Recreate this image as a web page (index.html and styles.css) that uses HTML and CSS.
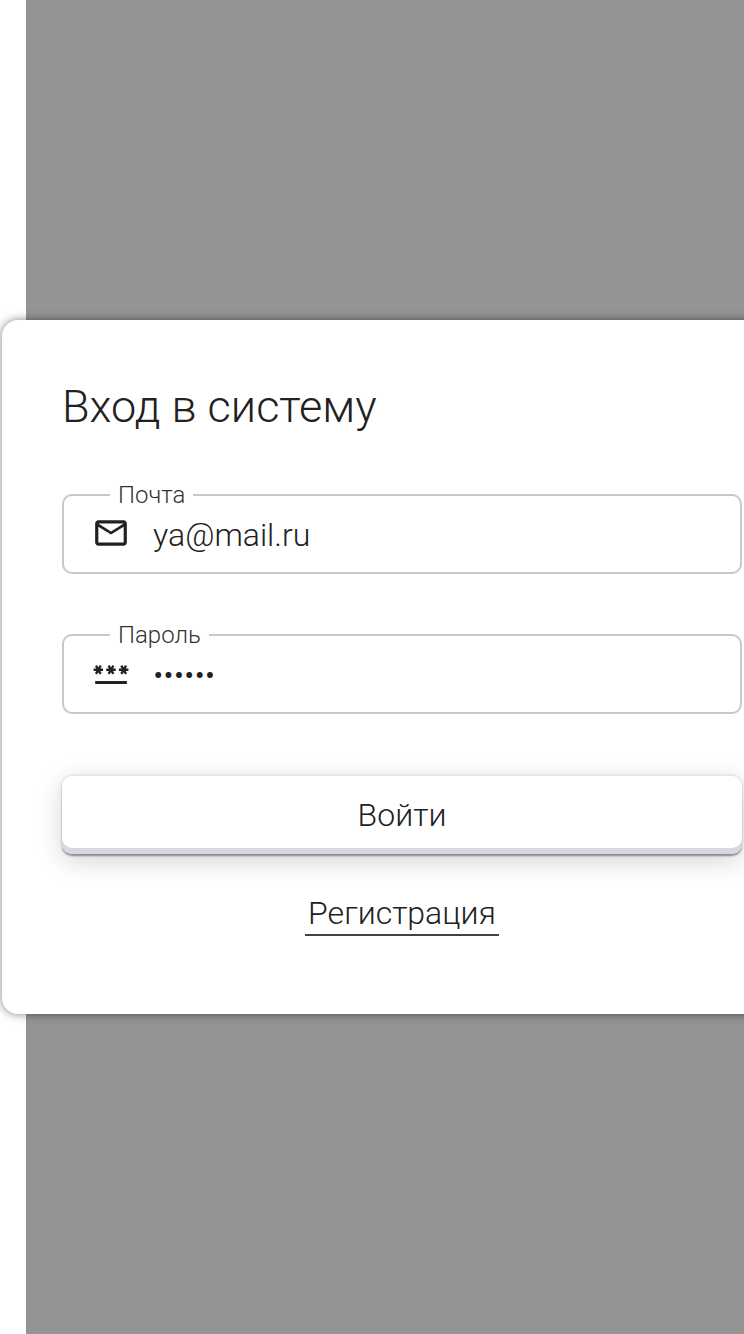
FILE: index.html
```
<!DOCTYPE html>
<html lang="ru">
<head>
<meta charset="utf-8">
<meta name="viewport" content="width=device-width, initial-scale=1">
<title>Вход в систему</title>
<link rel="stylesheet" href="styles.css">
</head>
<body>
<main class="backdrop">
  <form class="card">
    <h1 class="title">Вход в систему</h1>
    <fieldset class="field">
      <legend class="legend"><label for="email">Почта</label></legend>
      <div class="row">
        <svg class="icon" viewBox="0 0 24 24" aria-hidden="true"><path d="M22 6c0-1.100-.9-2-2-2H4c-1.100 0-2 .9-2 2v12c0 1.100.9 2 2 2h16c1.100 0 2-.9 2-2V6zm-2 0-8 5-8-5h16zm0 12H4V8l8 5 8-5v10z"/></svg>
        <input class="input" id="email" type="email" value="ya@mail.ru">
      </div>
    </fieldset>
    <fieldset class="field">
      <legend class="legend"><label for="password">Пароль</label></legend>
      <div class="row">
        <svg class="icon" viewBox="0 0 24 24" aria-hidden="true"><path d="M2 17h20v2H2v-2zm1.150-4.050L4 11.470l.85 1.480 1.300-.75-.85-1.480H7v-1.500H5.300l.85-1.470L4.850 7 4 8.470 3.150 7l-1.300.75.85 1.470H1v1.500h1.700l-.85 1.480 1.300.75zm6.700-.75 1.300.75.85-1.480.85 1.480 1.300-.75-.85-1.480H15v-1.500h-1.700l.85-1.470-1.300-.75L12 8.470 11.150 7l-1.300.75.85 1.470H9v1.500h1.700l-.85 1.480zM23 9.220h-1.700l.85-1.470-1.300-.75L20 8.470 19.150 7l-1.300.75.85 1.470H17v1.500h1.700l-.85 1.480 1.300.75.85-1.480.85 1.480 1.300-.75-.85-1.480H23v-1.500z"/></svg>
        <input class="input" id="password" type="password" value="secret">
      </div>
    </fieldset>
    <button class="submit" type="submit">Войти</button>
    <a class="register" href="#register">Регистрация</a>
  </form>
</main>
</body>
</html>
```
FILE: styles.css
```
* {
  box-sizing: border-box;
}

html {
  overflow-x: hidden;
}

body {
  margin: 0;
  background: #fff;
  color: #212121;
  font-family: Roboto, "Noto Sans", sans-serif;
  font-weight: 300;
}

.backdrop {
  display: flex;
  align-items: center;
  min-height: 100vh;
  margin-left: 26px;
  background: #949494;
}

/* The card is wider than the backdrop and hangs over both of its sides. */
.card {
  display: flex;
  flex: none;
  flex-direction: column;
  width: calc(100% + 82px);
  margin-left: -24px;
  padding: 60px 60px 78px;
  border-radius: 16px;
  background: #fff;
  box-shadow: 0 0 10px rgba(0, 0, 0, 0.5);
}

.title {
  margin: 0 0 48px;
  font-size: 45px;
  font-weight: 300;
  line-height: 54px;
}

.field {
  min-width: 0;
  height: 92px;
  margin: 0 0 48px;
  padding: 0 28px;
  border: 2px solid #c8c8c8;
  border-radius: 10px;
}

.legend {
  margin-left: 18px;
  padding: 0 8px;
  color: #333;
  font-size: 24px;
  line-height: 26px;
}

.row {
  display: flex;
  align-items: center;
  gap: 23px;
  height: 54px;
}

.icon {
  flex: none;
  width: 38px;
  height: 38px;
  margin-bottom: 4px;
  fill: #212121;
}

.input {
  flex: 1;
  min-width: 0;
  padding: 0;
  border: 0;
  outline: 0;
  background: none;
  color: inherit;
  font: inherit;
  font-size: 32px;
  line-height: 40px;
}

.submit {
  height: 80px;
  margin-top: 12px;
  padding: 2px 0 0;
  border: 0;
  border-radius: 10px;
  background: #fff;
  color: inherit;
  font: inherit;
  font-size: 32px;
  box-shadow: inset 0 -6px #d6d6e4, inset 0 2px #e8e8e8, 0 2px 2px rgba(0, 0, 0, 0.4), 0 7px 26px rgba(0, 0, 0, 0.17);
}

.register {
  align-self: center;
  margin-top: 38px;
  padding: 0 3px;
  border-bottom: 2px solid #424242;
  color: inherit;
  font-size: 32px;
  line-height: 42px;
  text-decoration: none;
}
```
